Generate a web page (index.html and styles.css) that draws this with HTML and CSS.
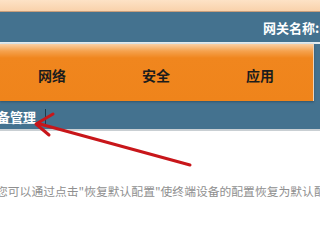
FILE: index.html
```html
<!DOCTYPE html>
<html>
  <head>
    <meta charset="UTF-8" />
    <title>网关设置</title>
    <link rel="stylesheet" href="styles.css">
  </head>
  <body>
    <div class="top-band"></div>
    <div class="title-bar">
      <span class="gw-name">网关名称:HG8245</span>
    </div>
    <div class="nav">
      <div class="tabs">
        <div class="tab">网络</div>
        <div class="tab">安全</div>
        <div class="tab">应用</div>
      </div>
      <div class="sub-bar">
        <span class="sub-link">设备管理</span>
        <span class="sep"></span>
      </div>
    </div>
    <div class="content">
      <p class="hint">您可以通过点击"恢复默认配置"使终端设备的配置恢复为默认配置。</p>
    </div>
    <svg class="arrow" width="320" height="240" viewBox="0 0 320 240">
      <line x1="190" y1="165" x2="40" y2="124" stroke="#c8161a" stroke-width="3" stroke-linecap="round" />
      <polyline points="53,114 36,124 49,135" fill="none" stroke="#c8161a" stroke-width="3" stroke-linecap="round" stroke-linejoin="round" />
    </svg>
  </body>
</html>
```

FILE: styles.css
```css
body {
  margin: 0;
  width: 320px;
  height: 240px;
  overflow: hidden;
  position: relative;
  font-family: "Noto Sans CJK SC", "DejaVu Sans", sans-serif;
  background: #fff;
}

.top-band {
  height: 11px;
  background: linear-gradient(#fde2c6, #f9d2ab);
  border-bottom: 1px solid #c89e7c;
}

.title-bar {
  height: 30px;
  background: #44728f;
  display: flex;
  align-items: center;
  padding-left: 263px;
  white-space: nowrap;
  overflow: hidden;
}

.gw-name {
  color: #fff;
  font-weight: bold;
  font-size: 13px;
}

.nav {
  background: #44728f;
  border-top: 2px solid #e4ecef;
  border-bottom: 2px solid #c9cfd3;
}

.tabs {
  width: 313px;
  height: 57px;
  display: flex;
  background: linear-gradient(#fbd0a4 0px, #f5a24e 7px, #f0861e 14px, #ef841b);
  border-right: 1px solid #e9d3bc;
  box-shadow: 0 1px 2px #33556b;
}

.tab {
  width: 104px;
  display: flex;
  align-items: center;
  justify-content: center;
  font-size: 14px;
  font-weight: bold;
  color: #1c1c1c;
  padding-top: 5px;
}

.sub-bar {
  height: 28px;
  display: flex;
  align-items: center;
  white-space: nowrap;
  padding-top: 3px;
  box-sizing: border-box;
}

.sub-link {
  margin-left: -16px;
  color: #fff;
  font-size: 13px;
  font-weight: bold;
  text-decoration: underline;
  text-decoration-color: #c5d3dc;
}

.sep {
  width: 1px;
  height: 15px;
  margin-left: 9px;
  background: #1f3a4c;
}

.content {
  padding-top: 51px;
}

.hint {
  margin: 0 0 0 -4px;
  white-space: nowrap;
  font-size: 11.8px;
  color: #8f8f8f;
}

.arrow {
  position: absolute;
  left: 0;
  top: 0;
}
```
